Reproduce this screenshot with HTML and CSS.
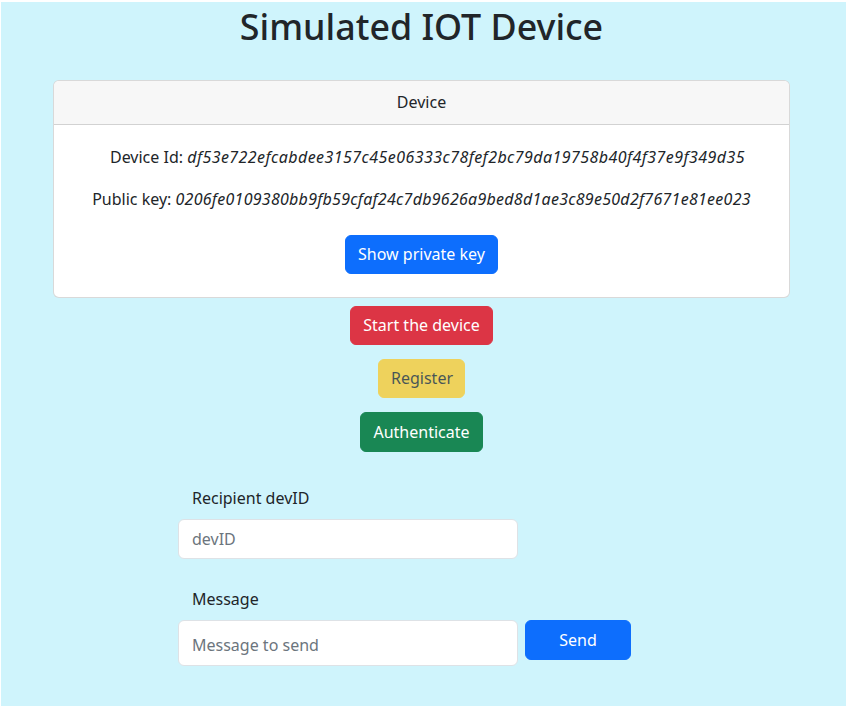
FILE: index.html
```html
<!DOCTYPE html>
<html lang="en">
<head>
<meta charset="utf-8">
<title>Simulated IOT Device</title>
<link rel="stylesheet" href="styles.css">
</head>
<body>
<div class="page">
  <h1 class="title">Simulated IOT Device</h1>
  <div class="container">
    <div class="card">
      <div class="card-header">Device</div>
      <div class="card-body">
        <p class="info info-id">Device Id: <i class="val val-id">df53e722efcabdee3157c45e06333c78fef2bc79da19758b40f4f37e9f349d35</i></p>
        <p class="info info-key">Public key: <i class="val val-key">0206fe0109380bb9fb59cfaf24c7db9626a9bed8d1ae3c89e50d2f7671e81ee023</i></p>
        <button class="btn btn-primary btn-key">Show private key</button>
      </div>
    </div>
    <div class="actions">
      <button class="btn btn-danger">Start the device</button>
      <button class="btn btn-warning" disabled>Register</button>
      <button class="btn btn-success">Authenticate</button>
    </div>
    <form class="send-form">
      <label class="label" for="dev">Recipient devID</label>
      <div class="row">
        <input class="input" id="dev" type="text" placeholder="devID">
      </div>
      <label class="label label-msg" for="msg">Message</label>
      <div class="row">
        <input class="input input-msg" id="msg" type="text" placeholder="Message to send">
        <button type="button" class="btn btn-primary btn-send">Send</button>
      </div>
    </form>
  </div>
</div>
</body>
</html>
```
FILE: styles.css
```css
* { box-sizing: border-box; }
html, body { margin: 0; padding: 0; background: #ffffff; }
body {
  font-family: "Noto Sans", "Open Sans", sans-serif;
  font-size: 16px;
  line-height: 1.5;
  color: #212529;
}
.page {
  margin: 2px 2px 1px 1px;
  height: 704px;
  background: #cff4fc;
  padding-top: 1px;
}
.title {
  margin: 0;
  text-align: center;
  font-size: 35.8px;
  font-weight: 500;
  line-height: 46px;
  color: #212529;
  padding-right: 4px;
}
.container {
  width: 737px;
  margin-left: 52px;
  margin-top: 31px;
}
.card {
  background: #fff;
  border: 1px solid rgba(0,0,0,0.15);
  border-radius: 6px;
  overflow: hidden;
}
.card-header {
  background: #f7f7f7;
  border-bottom: 1px solid rgba(0,0,0,0.15);
  text-align: center;
  height: 44px;
  line-height: 42px;
}
.card-body {
  padding: 20px 16px 23px;
  text-align: center;
}
.info { margin: 0 0 18px; }
.info-id { padding-left: 12px; }
.info-key { margin-bottom: 24px; }
.val-id { letter-spacing: 0.44px; }
.val-key { letter-spacing: 0.27px; }
.btn {
  display: inline-block;
  font-family: inherit;
  font-size: 16px;
  line-height: 24px;
  padding: 6px 12px 7px;
  border: 1px solid transparent;
  border-radius: 6px;
  color: #fff;
  cursor: pointer;
}
.btn-primary { background: #0d6efd; border-color: #0d6efd; }
.btn-danger { background: #dc3545; border-color: #dc3545; }
.btn-success { background: #198754; border-color: #198754; }
.btn-warning { background: #ffc107; border-color: #ffc107; color: #000; }
.btn:disabled { opacity: 0.65; cursor: default; }
.btn-key { width: 153px; }
.actions {
  display: flex;
  flex-direction: column;
  align-items: center;
  gap: 14px;
  margin-top: 8px;
}
.btn-danger { width: 143px; }
.btn-warning { width: 87px; }
.btn-success { width: 123px; padding-top: 7px; padding-bottom: 7px; }
.send-form {
  margin-left: 125px;
  margin-top: 34px;
  width: 460px;
}
.label {
  display: block;
  padding-left: 14px;
  margin-bottom: 9px;
}
.label-msg { margin-top: 28px; }
.row {
  display: flex;
  gap: 7px;
  align-items: flex-start;
}
.input {
  width: 340px;
  height: 40px;
  padding: 6px 13px;
  font-family: inherit;
  font-size: 16px;
  color: #212529;
  background: #fff;
  border: 1px solid #dee2e6;
  border-radius: 6px;
}
.input-msg { height: 46px; padding-top: 10px; }
.input::placeholder { color: #6c757d; }
.btn-send { width: 106px; height: 40px; }
```
